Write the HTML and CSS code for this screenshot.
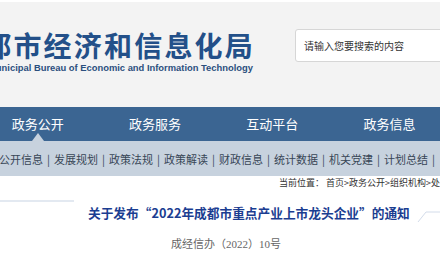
FILE: index.html
```html
<!DOCTYPE html>
<html lang="zh-CN">
<head>
    <meta charset="UTF-8">
    <meta name="viewport" content="width=device-width, initial-scale=1.0">
    <title>成都市经济和信息化局</title>
    <link rel="stylesheet" href="styles.css">
</head>
<body>

    <div class="page">
        <header class="site-header">
            <div class="logo">
                <div class="logo-cn">成都市经济和信息化局</div>
                <div class="logo-en">Chengdu Municipal Bureau of Economic and Information Technology</div>
            </div>
            <div class="search-box">请输入您要搜索的内容</div>
        </header>

        <nav class="main-nav">
            <a class="nav-item active">政务公开</a>
            <a class="nav-item">政务服务</a>
            <a class="nav-item">互动平台</a>
            <a class="nav-item">政务信息</a>
        </nav>

        <div class="sub-nav">
            <span class="sub-item">公开信息</span><span class="sep">|</span>
            <span class="sub-item">发展规划</span><span class="sep">|</span>
            <span class="sub-item">政策法规</span><span class="sep">|</span>
            <span class="sub-item">政策解读</span><span class="sep">|</span>
            <span class="sub-item">财政信息</span><span class="sep">|</span>
            <span class="sub-item">统计数据</span><span class="sep">|</span>
            <span class="sub-item">机关党建</span><span class="sep">|</span>
            <span class="sub-item">计划总结</span><span class="sep">|</span>
        </div>

        <div class="breadcrumb">当前位置：&nbsp;首页&gt;政务公开&gt;组织机构&gt;处室</div>

        <div class="title-row">
            <div class="title-line"></div>
            <h1 class="doc-title">关于发布“2022年成都市重点产业上市龙头企业”的通知</h1>
            <svg class="title-deco" width="40" height="14" viewBox="0 0 40 14">
                <polyline points="1,12 9,2 40,2" fill="none" stroke="#d3dcea" stroke-width="1"/>
            </svg>
        </div>

        <div class="doc-number">成经信办（2022）10号</div>
    </div>

</body>
</html>
```

FILE: styles.css
```css
* { margin: 0; padding: 0; box-sizing: border-box; }

body {
    font-family: "Noto Sans CJK SC", "Noto Sans", sans-serif;
    background: #ffffff;
    color: #333;
    overflow: hidden;
}

/* page is wider than the window, left edge is cut off */
.page {
    margin-left: -21px;
    width: 520px;
}

.site-header {
    display: flex;
    align-items: flex-start;
    height: 107px;
    border-top: 2px solid #ffffff;
    background-color: #f3f3f3;
}

.logo {
    width: 274px;
    margin-top: 27px;
}
.logo-cn {
    display: flex;
    justify-content: flex-end;
    white-space: nowrap;
    font-size: 28px;
    font-weight: 700;
    line-height: 32px;
    letter-spacing: 2.2px;
    margin-right: -2px;
    color: #235089;
}
.logo-en {
    display: flex;
    justify-content: flex-end;
    white-space: nowrap;
    margin-top: 1px;
    font-family: "Liberation Sans", Arial, sans-serif;
    font-size: 9.4px;
    font-weight: 700;
    line-height: 11px;
    color: #2b4f7e;
}

.search-box {
    margin-left: 42px;
    margin-top: 27px;
    width: 180px;
    height: 33px;
    padding-left: 8px;
    background: #ffffff;
    border: 1px solid #d6d6d6;
    border-radius: 3px;
    font-size: 10px;
    line-height: 31px;
    color: #333;
}

.main-nav {
    display: flex;
    height: 34px;
    background-color: #3b6592;
}
.nav-item {
    position: relative;
    width: 117.3px;
    text-align: center;
    font-size: 13px;
    line-height: 34px;
    color: #ffffff;
}
.nav-item.active::after {
    content: "";
    position: absolute;
    left: 50%;
    bottom: 0;
    margin-left: -6px;
    border-left: 6px solid transparent;
    border-right: 6px solid transparent;
    border-bottom: 8px solid #c7d2de;
}

.sub-nav {
    display: flex;
    align-items: center;
    height: 35px;
    padding-left: 20px;
    background-color: #c7d2de;
    font-size: 11px;
    color: #384656;
    white-space: nowrap;
}
.sep { margin: 0 4px; }

.breadcrumb {
    height: 14px;
    padding-left: 300px;
    font-size: 9px;
    line-height: 14px;
    color: #333;
    white-space: nowrap;
}

.title-row {
    display: flex;
    align-items: flex-start;
    margin-top: 10px;
}
.title-line {
    width: 95px;
    height: 1.5px;
    background-color: #e3e9f1;
}
.doc-title {
    margin-left: 14px;
    margin-top: 4px;
    font-size: 12.7px;
    font-weight: 700;
    line-height: 18px;
    color: #1b3d91;
    white-space: nowrap;
}
.title-deco {
    flex-shrink: 0;
    margin-left: 7px;
    margin-top: 10px;
}

.doc-number {
    margin-top: 12px;
    padding-left: 192px;
    font-family: "Liberation Serif", "Noto Sans CJK SC", serif;
    font-size: 11px;
    line-height: 16px;
    color: #666;
}
```
